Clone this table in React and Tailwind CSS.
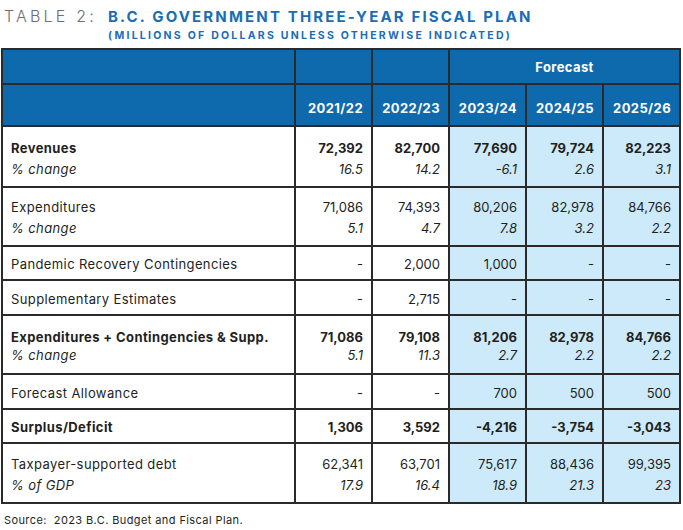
const rows = [
  { label: 'Revenues', sub: '% change', bold: true, h: 'h-[61px]', vals: ['72,392', '82,700', '77,690', '79,724', '82,223'], subs: ['16.5', '14.2', '-6.1', '2.6', '3.1'] },
  { label: 'Expenditures', sub: '% change', h: 'h-[59px]', vals: ['71,086', '74,393', '80,206', '82,978', '84,766'], subs: ['5.1', '4.7', '7.8', '3.2', '2.2'] },
  { label: 'Pandemic Recovery Contingencies', h: 'h-[34px]', vals: ['-', '2,000', '1,000', '-', '-'] },
  { label: 'Supplementary Estimates', h: 'h-[35px]', vals: ['-', '2,715', '-', '-', '-'] },
  { label: 'Expenditures + Contingencies & Supp.', sub: '% change', bold: true, tight: true, h: 'h-[59px]', vals: ['71,086', '79,108', '81,206', '82,978', '84,766'], subs: ['5.1', '11.3', '2.7', '2.2', '2.2'] },
  { label: 'Forecast Allowance', h: 'h-[35px]', vals: ['-', '-', '700', '500', '500'] },
  { label: 'Surplus/Deficit', bold: true, h: 'h-[34px]', vals: ['1,306', '3,592', '-4,216', '-3,754', '-3,043'] },
  { label: 'Taxpayer-supported debt', sub: '% of GDP', h: 'h-[60px]', vals: ['62,341', '63,701', '75,617', '88,436', '99,395'], subs: ['17.9', '16.4', '18.9', '21.3', '23'] },
]

const years = ['2021/22', '2022/23', '2023/24', '2024/25', '2025/26']
const cell = 'border-2 border-[#2a2a2a]'

function pad(r) {
  if (!r.sub) return 'pb-[5px]'
  return r.tight ? 'pb-[8px]' : 'pb-[7px]'
}

export default function App() {
  return (
    <div className="w-[683px] h-[530px] bg-white text-[#231f20] font-['Inter',sans-serif] overflow-hidden">
      {/* Title */}
      <div className="flex items-baseline pl-[4px] pt-[4px]">
        <span className="w-[104px] text-[16px] font-light tracking-[3.2px] text-[#6d6e71]">TABLE 2:</span>
        <span className="text-[15px] font-bold tracking-[2.15px] text-[#1a6db3]">B.C. GOVERNMENT THREE-YEAR FISCAL PLAN</span>
      </div>
      <div className="pl-[108px] mt-[-1px] text-[10.5px] font-bold tracking-[2.25px] text-[#1a6db3]">
        (MILLIONS OF DOLLARS UNLESS OTHERWISE INDICATED)
      </div>

      <table className="mt-[5px] ml-[1px] w-[678px] table-fixed border-collapse text-[13px]">
        <colgroup>
          <col className="w-[293px]" />
          <col className="w-[77px]" />
          <col className="w-[77px]" />
          <col className="w-[77px]" />
          <col className="w-[77px]" />
          <col className="w-[77px]" />
        </colgroup>
        <thead className="bg-[#0f69ad] text-white font-bold tracking-[0.4px]">
          <tr className="h-[35px]">
            <th className={cell}></th>
            <th className={cell}></th>
            <th className={cell}></th>
            <th colSpan={3} className={`${cell} text-center align-bottom pb-[6px]`}>
              Forecast
            </th>
          </tr>
          <tr className="h-[42px]">
            <th className={cell}></th>
            {years.map((y) => (
              <th key={y} className={`${cell} text-right align-bottom pr-[8px] pb-[7px]`}>
                {y}
              </th>
            ))}
          </tr>
        </thead>
        <tbody>
          {rows.map((r) => (
            <tr key={r.label} className={r.h}>
              <td className={`${cell} pl-[8px] align-bottom tracking-[0.4px] ${pad(r)}`}>
                <div className={r.bold ? 'font-bold' : ''}>{r.label}</div>
                {r.sub && <div className={`italic ${r.tight ? 'mt-[-2px]' : 'mt-[1px]'}`}>{r.sub}</div>}
              </td>
              {r.vals.map((v, i) => (
                <td
                  key={i}
                  className={`${cell} text-right pr-[8px] align-bottom ${pad(r)} ${i >= 2 ? 'bg-[#cdeafa]' : ''}`}
                >
                  <div className={r.bold ? 'font-bold' : ''}>{v}</div>
                  {r.sub && <div className={`italic ${r.tight ? 'mt-[-2px]' : 'mt-[1px]'}`}>{r.subs[i]}</div>}
                </td>
              ))}
            </tr>
          ))}
        </tbody>
      </table>

      <div className="pl-[4px] mt-[8px] text-[11px] tracking-[0.4px]">Source:&nbsp; 2023 B.C. Budget and Fiscal Plan.</div>
    </div>
  )
}
